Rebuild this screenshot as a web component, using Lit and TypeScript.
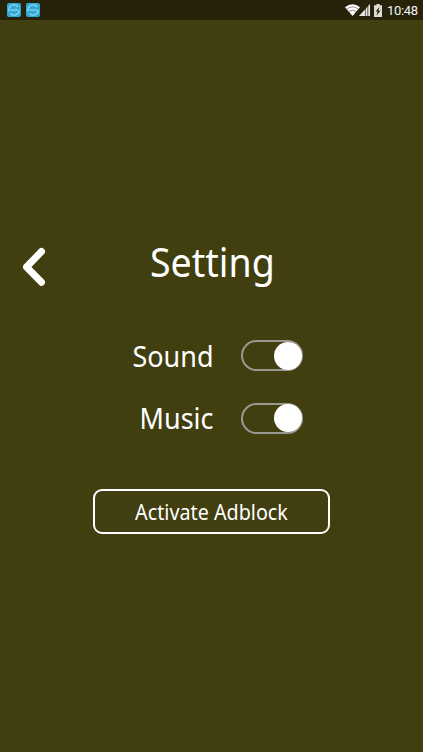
import { LitElement, html, css, svg } from "lit";
import { customElement, property, state } from "lit/decorators.js";

@customElement("toggle-switch")
class ToggleSwitch extends LitElement {
  @property({ type: Boolean, reflect: true }) on = false;

  static styles = css`
    :host {
      display: flex;
      box-sizing: border-box;
      width: 62px;
      height: 31px;
      border: 2px solid #999892;
      border-radius: 16px;
      align-items: center;
    }
    :host([on]) {
      justify-content: flex-end;
    }
    .knob {
      width: 28px;
      height: 28px;
      margin-right: -1px;
      border-radius: 50%;
      background: #fff;
      flex: none;
    }
  `;

  render() {
    return html`<div class="knob"></div>`;
  }
}

@customElement("status-bar")
class StatusBar extends LitElement {
  static styles = css`
    :host {
      display: flex;
      box-sizing: border-box;
      height: 20px;
      padding: 0 5px 0 7px;
      background: #26230a;
      color: #f4f4f0;
      align-items: center;
    }
    .apps {
      display: flex;
      gap: 5px;
      flex: 1;
    }
    svg {
      display: block;
      flex: none;
    }
    .wifi {
      margin-right: -1px;
    }
    .battery {
      margin-left: 4px;
    }
    .clock {
      width: 31px;
      margin-left: 5px;
      font: 13px/20px Roboto, sans-serif;
      letter-spacing: -0.3px;
      padding-top: 1px;
      white-space: nowrap;
    }
  `;

  private appIcon() {
    return svg`<svg width="14" height="14" viewBox="0 0 14 14">
      <rect width="14" height="14" rx="2" fill="#30a9d6"/>
      <circle cx="7" cy="7" r="5.2" fill="none" stroke="#a9e1f3" stroke-width="1.1" stroke-dasharray="12 2.5 14 3"/>
      <path d="M3.6 6l1 2 .9-2M6.6 6v2M8 8V6.3l1 1.3.9-1.3V8" fill="none" stroke="#a9e1f3" stroke-width=".7"/>
    </svg>`;
  }

  render() {
    return html`
      <div class="apps">${this.appIcon()}${this.appIcon()}</div>
      <svg class="wifi" width="15" height="12" viewBox="0 0 15 12">
        <path d="M0 3.2Q7.5-2.8 15 3.2L7.5 12Z" fill="#fff"/>
        <path d="M1.8 5Q7.5.8 13.2 5M3.8 7.5Q7.5 4.8 11.2 7.5" fill="none" stroke="#26230a" stroke-width=".5"/>
      </svg>
      <svg width="11" height="12" viewBox="0 0 11 12">
        <path d="M0 12L11 0V12Z" fill="#77756a"/>
        <path d="M0 12L6 5.5V12ZM7 4.4L8.2 3.1V12H7ZM9.4 1.8L11 0V12H9.4Z" fill="#e5e4df"/>
      </svg>
      <svg class="battery" width="8" height="13" viewBox="0 0 8 13">
        <path d="M2.4 0h3.2v1.3H8V13H0V1.3h2.4Z" fill="#dddcd5"/>
        <path d="M5.5 3L1.6 7.5h2L2.5 11.4l4-4.7H4.4Z" fill="#26230a"/>
      </svg>
      <span class="clock">10:48</span>
    `;
  }
}

@customElement("app-root")
class AppRoot extends LitElement {
  @state() private sound = true;
  @state() private music = true;

  static styles = css`
    :host {
      display: flex;
      flex-direction: column;
      height: 100vh;
      background: #413e10;
      color: #fff;
      font-family: "Noto Sans", sans-serif;
      overflow: hidden;
    }
    .header {
      display: grid;
      grid-template-columns: 149.5px 1fr;
      height: 50px;
      margin-top: 218px;
    }
    .back {
      display: block;
      margin: 9px 0 0 22px;
    }
    .title {
      margin: 0;
      font-size: 39.5px;
      font-weight: 400;
      line-height: 48px;
      transform: scaleX(0.95);
      transform-origin: left;
      white-space: nowrap;
    }
    .row {
      display: grid;
      grid-template-columns: 213.5px 62px;
      column-gap: 27.5px;
      height: 31px;
    }
    .first {
      margin-top: 52px;
    }
    .second {
      margin-top: 31.5px;
    }
    .label {
      font-size: 29px;
      line-height: 31px;
      text-align: right;
      transform: scaleX(0.93);
      transform-origin: right;
      white-space: nowrap;
    }
    .second .label {
      line-height: 29px;
    }
    .adblock {
      box-sizing: border-box;
      width: 237px;
      height: 45px;
      margin: 55.5px 0 0 93px;
      padding: 0;
      border: 2px solid #fff;
      border-radius: 9px;
      background: none;
      color: inherit;
      font: 21px/41px "Noto Sans", sans-serif;
      white-space: nowrap;
    }
    .caption {
      display: block;
      padding-top: 1px;
      height: 41px;
      box-sizing: border-box;
      transform: scaleX(0.94);
    }
  `;

  render() {
    return html`
      <status-bar></status-bar>
      <div class="header">
        <svg class="back" width="24" height="40" viewBox="0 0 24 40">
          <path d="M19.5 4.5L4.5 20L19.5 35.3" fill="none" stroke="#fff" stroke-width="7" stroke-linecap="round" stroke-linejoin="round"/>
        </svg>
        <h1 class="title">Setting</h1>
      </div>
      <div class="row first">
        <span class="label">Sound</span>
        <toggle-switch ?on=${this.sound} @click=${() => (this.sound = !this.sound)}></toggle-switch>
      </div>
      <div class="row second">
        <span class="label">Music</span>
        <toggle-switch ?on=${this.music} @click=${() => (this.music = !this.music)}></toggle-switch>
      </div>
      <button class="adblock"><span class="caption">Activate Adblock</span></button>
    `;
  }
}
